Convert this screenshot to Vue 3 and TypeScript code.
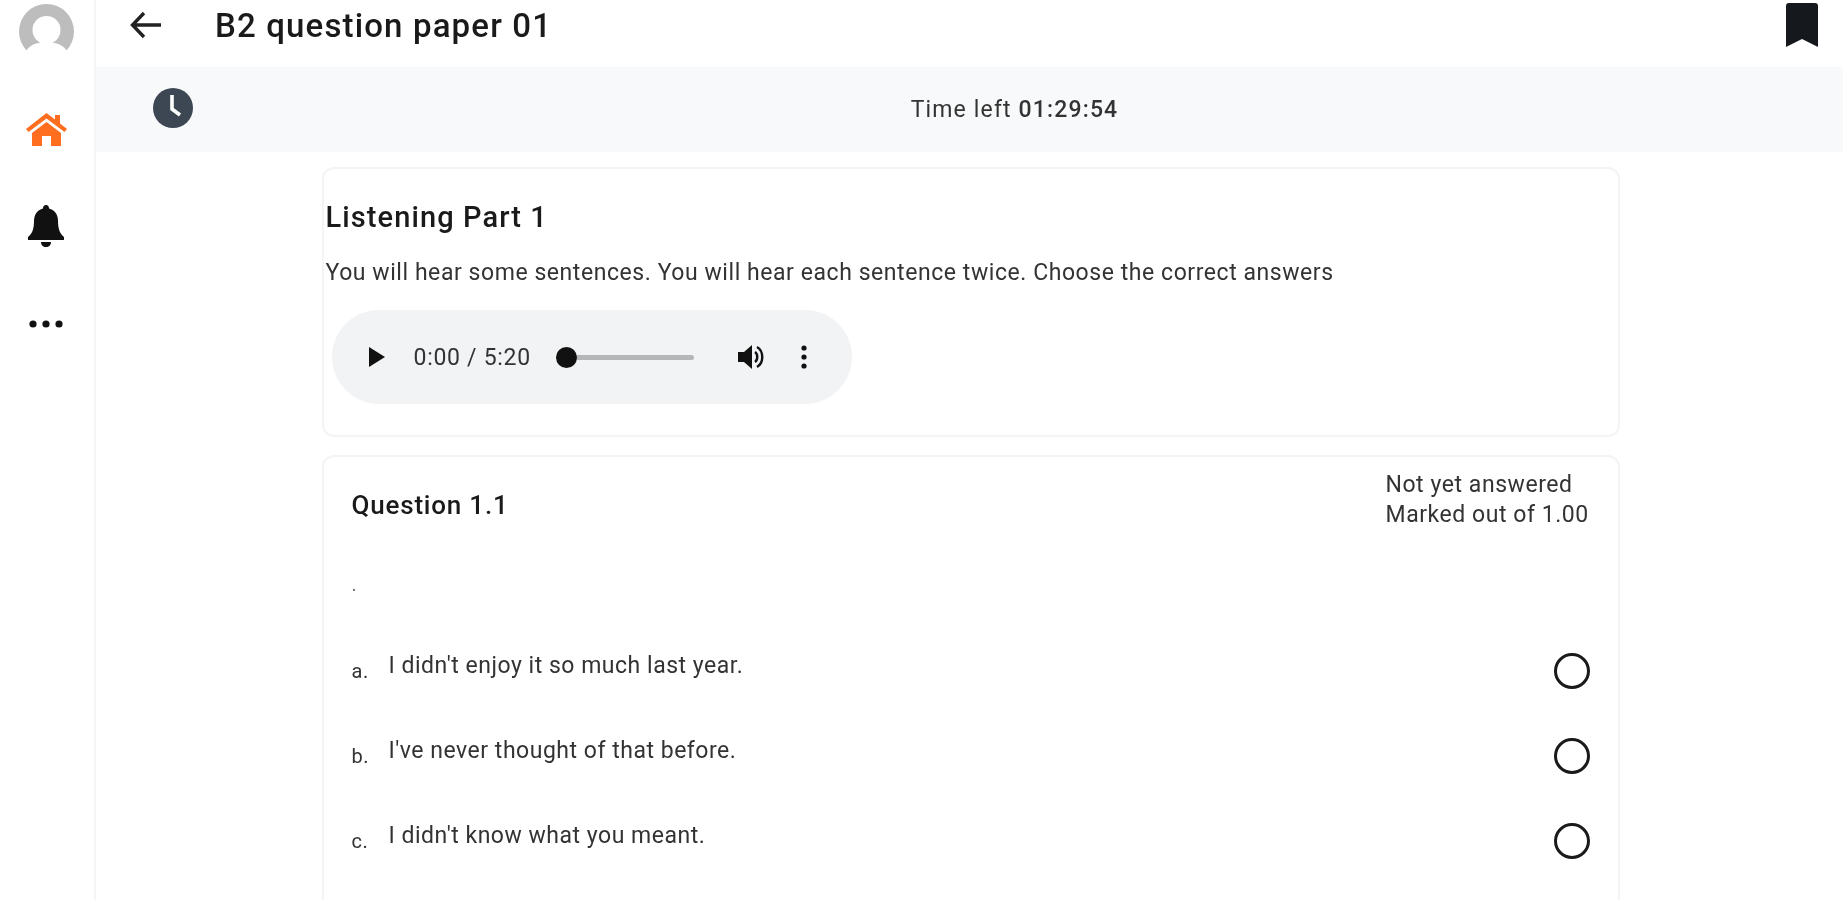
<script setup lang="ts">
interface Option {
  label: string
  text: string
}

const options: Option[] = [
  { label: 'a.', text: "I didn't enjoy it so much last year." },
  { label: 'b.', text: "I've never thought of that before." },
  { label: 'c.', text: "I didn't know what you meant." },
]
</script>

<template>
  <div class="app">
    <aside class="sidebar">
      <svg class="avatar" viewBox="0 0 55 48">
        <circle cx="27.500" cy="27.500" r="27.500" fill="#bdbdbd" />
        <circle cx="27.500" cy="26" r="14" fill="#fff" />
        <ellipse cx="27.500" cy="52" rx="22" ry="14" fill="#fff" />
      </svg>
      <svg class="nav-home" viewBox="0 0 41 33">
        <path d="M20.500 0 L29 6.500 V2 H34 V10.500 L41 16 L38.500 19 L20.500 5.500 L2.500 19 L0 16 Z" fill="#ff6d1f" />
        <path d="M20.500 9 L35 20 V33 H25 V23 H16 V33 H6 V20 Z" fill="#ff6d1f" />
      </svg>
      <svg class="nav-bell" viewBox="0 0 36 42">
        <path d="M18 0 C16 0 15 1.500 15 3.500 C9 5 6 10 6 16 C6 24 4 29 0 32 V35 H36 V32 C32 29 30 24 30 16 C30 10 27 5 21 3.500 C21 1.500 20 0 18 0 Z M13 37 C13 40 15 42 18 42 C21 42 23 40 23 37 Z" fill="#111" />
      </svg>
      <svg class="nav-more" viewBox="0 0 34 8">
        <circle cx="4" cy="4" r="3.600" fill="#111" />
        <circle cx="17" cy="4" r="3.600" fill="#111" />
        <circle cx="30" cy="4" r="3.600" fill="#111" />
      </svg>
    </aside>

    <div class="main">
      <header class="topbar">
        <svg class="back" viewBox="0 0 31 28">
          <path d="M14 2 L2.500 14 L14 26 M2.500 14 H31" fill="none" stroke="#222" stroke-width="3.400" />
        </svg>
        <h1 class="title">B2 question paper 01</h1>
        <svg class="bookmark" viewBox="0 0 32 44">
          <path d="M3 0 H29 C31 0 32 1 32 3 V44 L16 36 L0 44 V3 C0 1 1 0 3 0 Z" fill="#15181c" />
        </svg>
      </header>

      <div class="timer">
        <svg class="clock" viewBox="0 0 40 40">
          <circle cx="20" cy="20" r="20" fill="#3c4753" />
          <path d="M19 7 V21 L27 27" fill="none" stroke="#fff" stroke-width="3.600" />
        </svg>
        <p class="time-left">Time left <b>01:29:54</b></p>
      </div>

      <div class="content">
        <section class="card intro">
          <h2 class="part">Listening Part 1</h2>
          <p class="instructions">You will hear some sentences. You will hear each sentence twice. Choose the correct answers</p>
          <div class="player">
            <svg class="play" viewBox="0 0 16 20"><path d="M0 0 L16 10 L0 20 Z" fill="#111" /></svg>
            <span class="player-time">0:00 / 5:20</span>
            <div class="track"><span class="thumb"></span></div>
            <svg class="volume" viewBox="0 0 28 26">
              <path d="M0 8 H6 L14 1 V25 L6 18 H0 Z" fill="#111" />
              <path d="M17 8 C20 10 20 16 17 18" fill="none" stroke="#111" stroke-width="2.400" />
              <path d="M19 3 C26 7 26 19 19 23" fill="none" stroke="#111" stroke-width="2.400" />
            </svg>
            <svg class="kebab" viewBox="0 0 6 24">
              <circle cx="3" cy="3" r="2.600" fill="#111" />
              <circle cx="3" cy="12" r="2.600" fill="#111" />
              <circle cx="3" cy="21" r="2.600" fill="#111" />
            </svg>
          </div>
        </section>

        <section class="card question">
          <div class="question-head">
            <h3 class="question-title">Question 1.1</h3>
            <p class="status">Not yet answered<br />Marked out of 1.00</p>
          </div>
          <p class="prompt">.</p>
          <div v-for="option in options" :key="option.label" class="option">
            <span class="option-label">{{ option.label }}</span>
            <span class="option-text">{{ option.text }}</span>
            <span class="radio"></span>
          </div>
        </section>
      </div>
    </div>
  </div>
</template>

<style>
html,
body {
  margin: 0;
  height: 100%;
  overflow: hidden;
  background: #fff;
}
</style>

<style scoped>
.app {
  display: flex;
  height: 900px;
  overflow: hidden;
  font-family: Roboto, "Liberation Sans", sans-serif;
  color: #222;
  background: #fff;
  filter: blur(0.7px);
}

.sidebar {
  flex: 0 0 96px;
  display: flex;
  flex-direction: column;
  align-items: center;
  padding: 4px 2px 0 0;
  border-right: 2px solid #f4f5f6;
  box-sizing: border-box;
}

.avatar {
  width: 55px;
  height: 48px;
}

.nav-home {
  width: 41px;
  height: 33px;
  margin-top: 61px;
}

.nav-bell {
  width: 36px;
  height: 42px;
  margin-top: 59px;
}

.nav-more {
  width: 34px;
  height: 8px;
  margin-top: 73px;
}

.main {
  flex: 1;
  min-width: 0;
}

.topbar {
  height: 67px;
  display: flex;
  align-items: center;
  box-sizing: border-box;
  padding: 0 25px 17px 34px;
}

.back {
  width: 31px;
  height: 28px;
}

.title {
  flex: 1;
  margin: 0 0 0 54px;
  font-size: 33px;
  font-weight: 500;
  letter-spacing: 1.15px;
  color: #1a1a1a;
}

.bookmark {
  width: 32px;
  height: 44px;
}

.timer {
  position: relative;
  height: 85px;
  display: flex;
  align-items: center;
  justify-content: center;
  box-sizing: border-box;
  padding-left: 90px;
  background: #f8f9fa;
}

.clock {
  position: absolute;
  left: 57px;
  top: 21px;
  width: 40px;
  height: 40px;
}

.time-left {
  margin: 0;
  font-size: 23px;
  letter-spacing: 1.15px;
  color: #333;
}

.time-left b {
  font-weight: 500;
}

.content {
  width: 1298px;
  margin: 15px auto 0;
  transform: translateX(1px);
}

.card {
  box-sizing: border-box;
  border: 2px solid #f3f4f5;
  border-radius: 12px;
}

.intro {
  height: 270px;
  margin-bottom: 18px;
  padding: 30px 2px 0;
}

.part {
  margin: 0;
  font-size: 29px;
  font-weight: 500;
  letter-spacing: 1.1px;
  line-height: 36px;
  color: #1a1a1a;
}

.instructions {
  margin: 23px 0 0;
  font-size: 23px;
  letter-spacing: 0.56px;
  line-height: 30px;
  color: #333;
}

.player {
  width: 520px;
  height: 94px;
  margin: 22px 0 0 6px;
  display: flex;
  align-items: center;
  box-sizing: border-box;
  padding-left: 37px;
  border-radius: 47px;
  background: #f1f3f4;
}

.play {
  width: 16px;
  height: 20px;
}

.player-time {
  width: 116px;
  margin-left: 29px;
  font-size: 23px;
  letter-spacing: 0.7px;
  white-space: nowrap;
  color: #333;
}

.track {
  position: relative;
  width: 138px;
  height: 5px;
  margin-left: 26px;
  border-radius: 3px;
  background: #b4b6b8;
}

.thumb {
  position: absolute;
  left: 0;
  top: -8px;
  width: 21px;
  height: 21px;
  border-radius: 50%;
  background: #111;
}

.volume {
  width: 28px;
  height: 26px;
  margin-left: 44px;
}

.kebab {
  width: 6px;
  height: 24px;
  margin-left: 35px;
}

.question {
  height: 600px;
  padding: 0 28px;
}

.question-head {
  display: flex;
  justify-content: space-between;
  padding-top: 12px;
}

.question-title {
  margin: 21px 0 0;
  font-size: 26px;
  font-weight: 500;
  letter-spacing: 0.8px;
  line-height: 30px;
  color: #1a1a1a;
}

.status {
  margin: 1px 1px 0 0;
  width: 203px;
  font-size: 23px;
  letter-spacing: 0.55px;
  line-height: 30px;
  white-space: nowrap;
  color: #333;
}

.prompt {
  margin: 39px 0 27px;
  font-size: 20px;
  line-height: 30px;
  color: #777;
}

.option {
  display: flex;
  align-items: center;
  height: 85px;
  font-size: 23px;
  letter-spacing: 0.52px;
  color: #333;
}

.option-label {
  width: 37px;
  padding-top: 5px;
  font-size: 20px;
}

.option-text {
  flex: 1;
  padding-bottom: 7px;
}

.radio {
  box-sizing: border-box;
  width: 36px;
  height: 36px;
  margin-top: 4px;
  border: 3px solid #1a1a1a;
  border-radius: 50%;
}
</style>
